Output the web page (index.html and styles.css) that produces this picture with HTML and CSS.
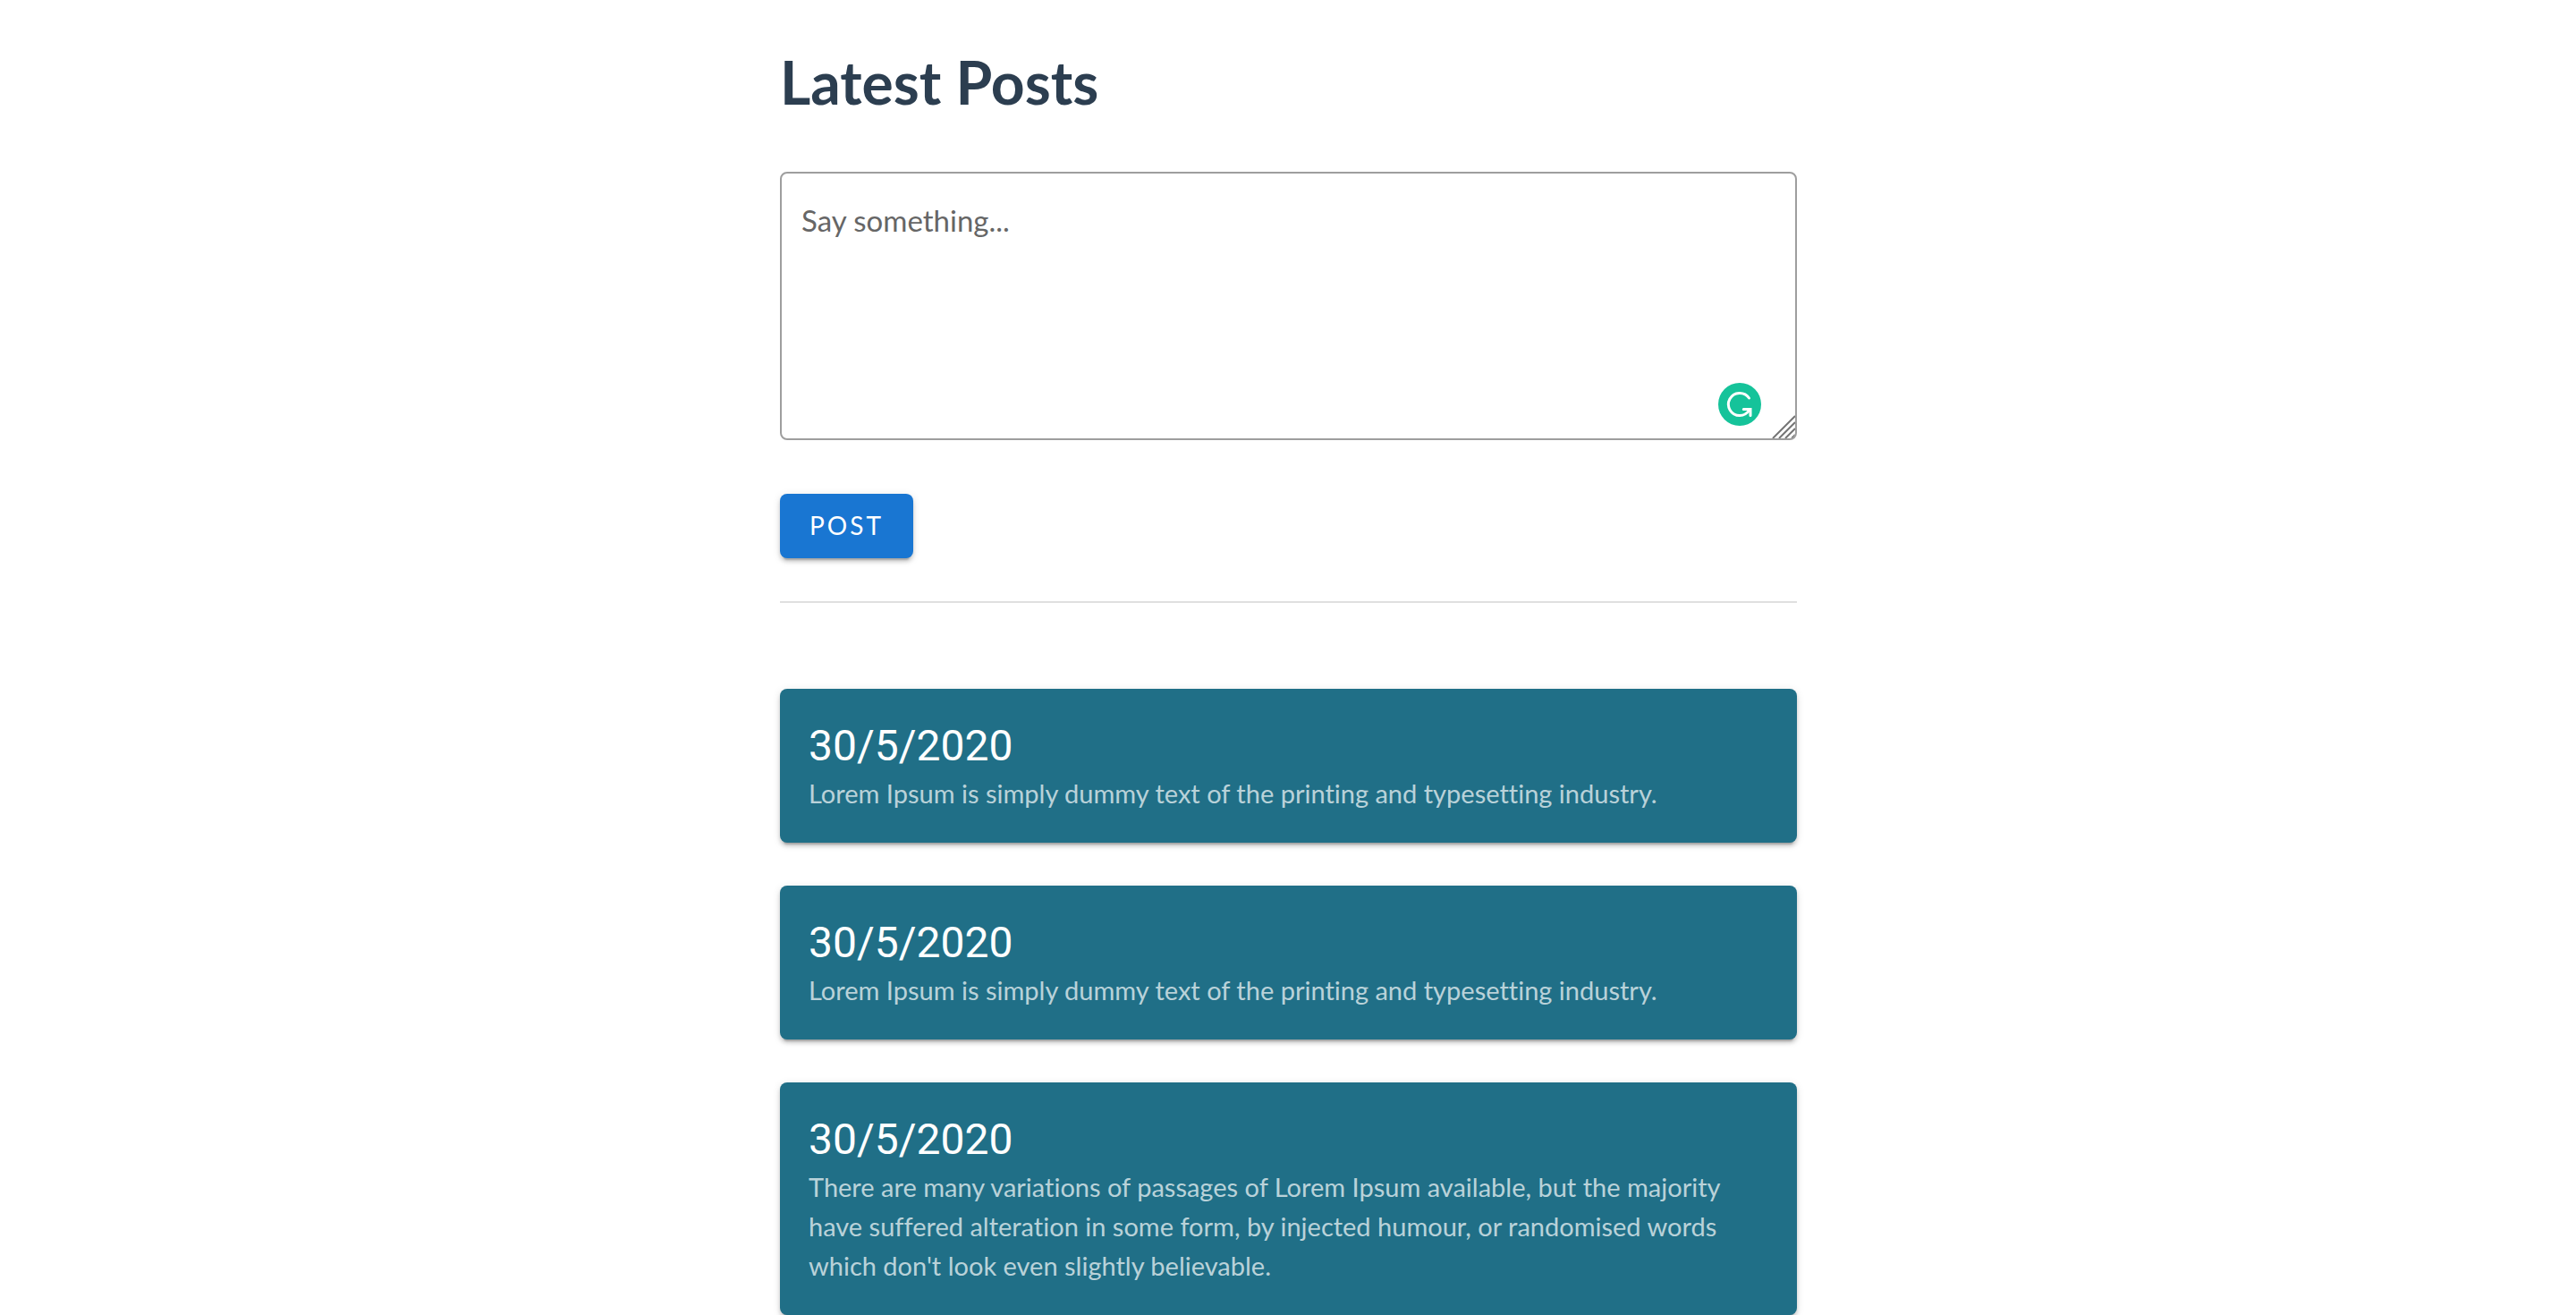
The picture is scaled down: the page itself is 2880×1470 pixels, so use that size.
FILE: index.html
```html
<!DOCTYPE html>
<html lang="en">
<head>
  <meta charset="utf-8">
  <meta name="viewport" content="width=device-width, initial-scale=1">
  <title>Latest Posts</title>
  <link rel="stylesheet" href="styles.css">
</head>
<body>
  <main class="container">
    <h1 class="page-title">Latest Posts</h1>

    <form class="composer">
      <div class="field">
        <textarea class="field-input" aria-label="Say something" placeholder="Say something..."></textarea>
        <svg class="writing-badge" viewBox="0 0 48 48" aria-hidden="true">
          <circle cx="24" cy="24" r="24" fill="#15c39a"/>
          <path d="M34.500 17A12.600 12.600 0 1 0 24 36.600C29 36.600 32.500 34 35.500 29.500" fill="none" stroke="#fff" stroke-width="3" stroke-linecap="round"/>
          <path d="M28.300 29.500H36V36.600" fill="none" stroke="#fff" stroke-width="3" stroke-linecap="round"/>
        </svg>
        <svg class="resize-grip" viewBox="0 0 26 26" aria-hidden="true">
          <path d="M1 26L26 1M8 26L26 8M15 26L26 15M22 26L26 22" fill="none" stroke="#757575" stroke-width="2"/>
        </svg>
      </div>
      <button class="button" type="button">Post</button>
    </form>

    <hr class="divider">

    <section class="posts" aria-label="Posts">
      <article class="card">
        <h2 class="card-date">30/5/2020</h2>
        <p class="card-text">Lorem Ipsum is simply dummy text of the printing and typesetting industry.</p>
      </article>
      <article class="card">
        <h2 class="card-date">30/5/2020</h2>
        <p class="card-text">Lorem Ipsum is simply dummy text of the printing and typesetting industry.</p>
      </article>
      <article class="card">
        <h2 class="card-date">30/5/2020</h2>
        <p class="card-text">There are many variations of passages of Lorem Ipsum available, but the majority have suffered alteration in some form, by injected humour, or randomised words which don't look even slightly believable.</p>
      </article>
    </section>
  </main>
</body>
</html>
```
FILE: styles.css
```css
*,
*::before,
*::after {
  box-sizing: border-box;
}

body {
  margin: 0;
  background: #fff;
  color: #2c3e50;
  font-family: Avenir, Lato, sans-serif;
  font-variant-ligatures: no-common-ligatures;
}

.container {
  max-width: 1200px;
  margin: 0 auto;
  padding: 48px 31px 0 32px;
}

.page-title {
  margin: 0 0 56px;
  font-size: 66px;
  line-height: 88px;
  font-weight: 700;
}

.composer {
  display: flex;
  flex-direction: column;
  align-items: flex-start;
  gap: 60px;
}

.field {
  position: relative;
  width: 100%;
}

.field-input {
  display: block;
  width: 100%;
  height: 300px;
  padding: 30px 22px;
  border: 2px solid #9e9e9e;
  border-radius: 8px;
  background: #fff;
  color: rgba(0, 0, 0, 0.87);
  font: inherit;
  font-size: 33px;
  line-height: 44px;
  resize: none;
}

.field-input::placeholder {
  color: #666;
  opacity: 1;
}

.writing-badge {
  position: absolute;
  right: 40px;
  bottom: 16px;
  width: 48px;
  height: 48px;
}

.resize-grip {
  position: absolute;
  right: 2px;
  bottom: 2px;
  width: 26px;
  height: 26px;
  border-bottom-right-radius: 6px;
  pointer-events: none;
}

.button {
  height: 72px;
  padding: 0 33px 3px;
  border: 0;
  border-radius: 8px;
  background: #1976d2;
  color: #fff;
  font: inherit;
  font-size: 28px;
  line-height: 44px;
  letter-spacing: 3px;
  text-transform: uppercase;
  box-shadow: 0 6px 2px -4px rgba(0, 0, 0, 0.2), 0 4px 4px rgba(0, 0, 0, 0.14), 0 2px 10px rgba(0, 0, 0, 0.12);
}

.divider {
  height: 2px;
  margin: 48px 0 96px;
  border: 0;
  background: #e0e0e0;
}

.posts {
  display: flex;
  flex-direction: column;
  gap: 48px;
}

.card {
  padding: 33px 32px;
  border-radius: 8px;
  background: #206f87;
  color: #fff;
  box-shadow: 0 6px 2px -4px rgba(0, 0, 0, 0.2), 0 4px 4px rgba(0, 0, 0, 0.14), 0 2px 10px rgba(0, 0, 0, 0.12);
}

.card-date {
  margin: 0;
  font-family: Roboto, sans-serif;
  font-size: 48px;
  line-height: 62px;
  font-weight: 400;
}

.card-text {
  margin: 0;
  color: rgba(255, 255, 255, 0.7);
  font-size: 29px;
  line-height: 44px;
}
```
